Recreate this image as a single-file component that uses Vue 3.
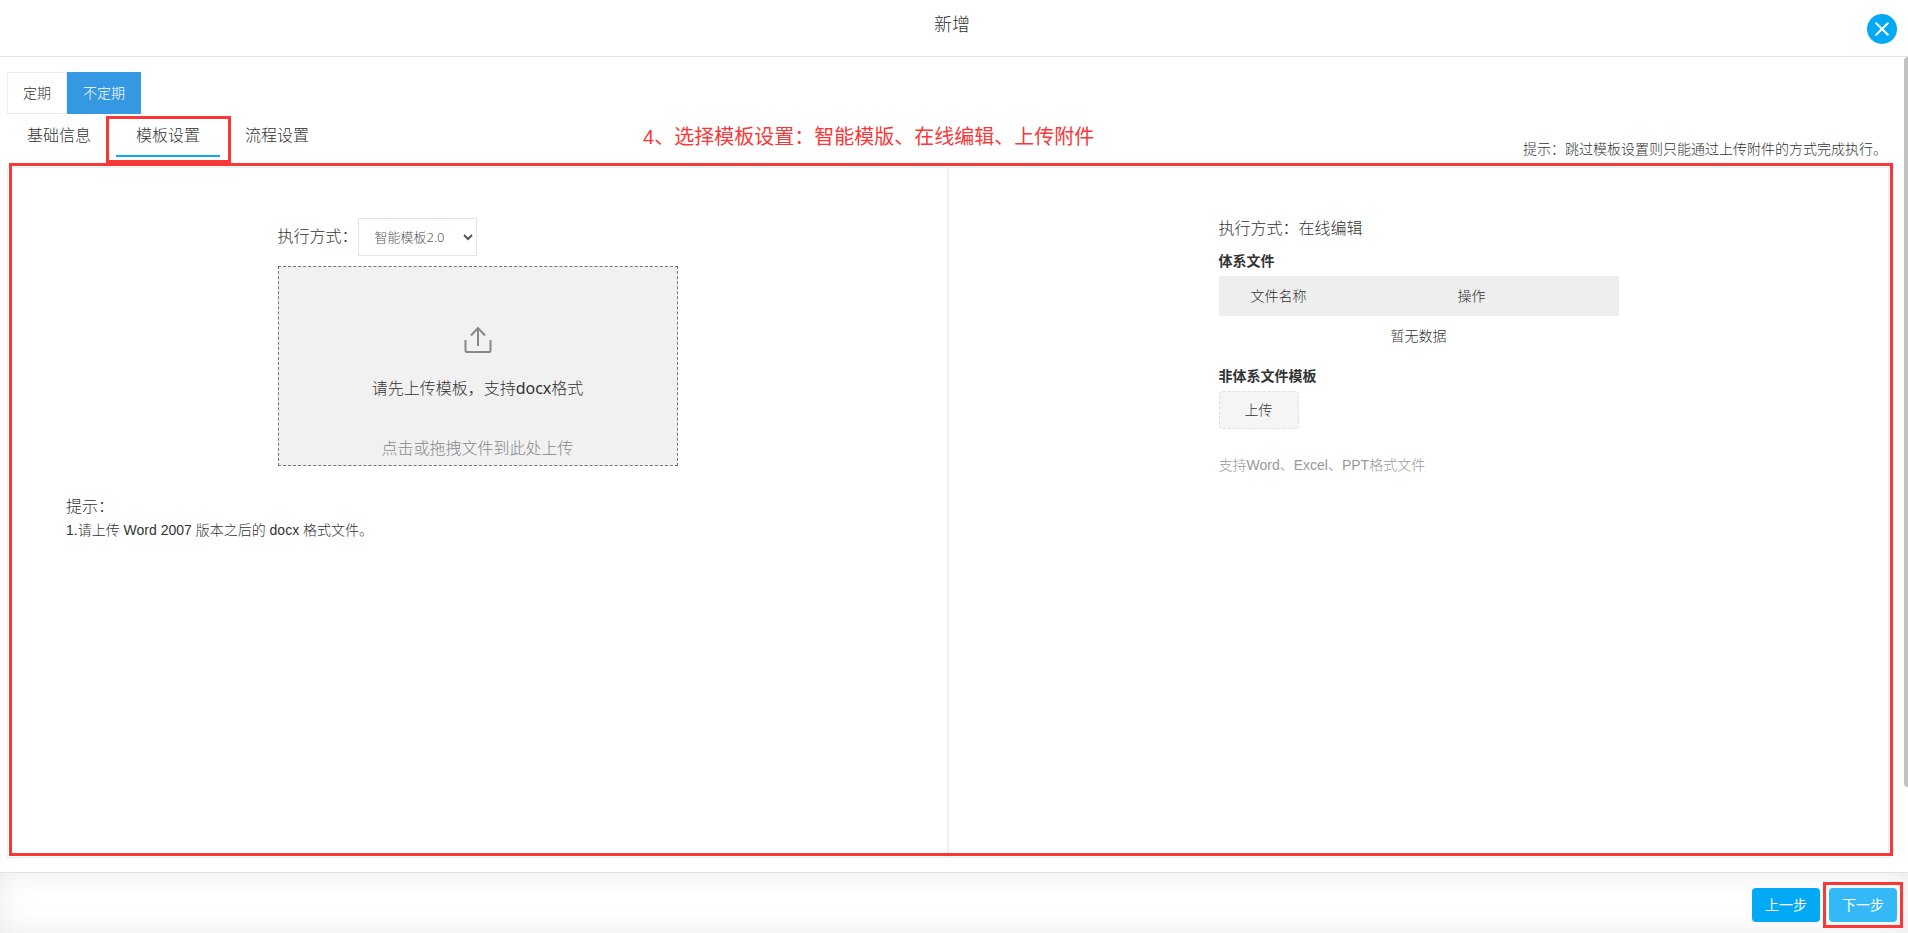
<script setup>
import { ref } from 'vue'

const periods = ['定期', '不定期']
const period = ref('不定期')
const tabs = ['基础信息', '模板设置', '流程设置']
const tab = ref('模板设置')
const mode = ref('智能模板2.0')
</script>

<template>
  <div class="dialog">
    <header class="head">
      <h1 class="title">新增</h1>
      <button class="close" type="button" aria-label="关闭">
        <svg width="14" height="14" viewBox="0 0 14 14" fill="none" stroke="#fff" stroke-width="2" stroke-linecap="round">
          <path d="M1.2 1.2 12.8 12.8M12.8 1.2 1.2 12.8" />
        </svg>
      </button>
    </header>

    <main class="body">
      <div class="periods">
        <button
          v-for="p in periods"
          :key="p"
          type="button"
          class="period"
          :class="{ active: p === period }"
          @click="period = p"
        >{{ p }}</button>
      </div>

      <div class="bar">
        <nav class="tabs">
          <button
            v-for="t in tabs"
            :key="t"
            type="button"
            class="tab"
            :class="{ active: t === tab }"
            @click="tab = t"
          >{{ t }}</button>
        </nav>
        <p class="note">4、选择模板设置：智能模版、在线编辑、上传附件</p>
        <p class="hint">提示：跳过模板设置则只能通过上传附件的方式完成执行。</p>
      </div>

      <div class="panel">
        <section class="half smart">
          <div class="column">
            <div class="mode">
              <label for="mode">执行方式：</label>
              <select id="mode" v-model="mode" class="select">
                <option>智能模板2.0</option>
              </select>
            </div>
            <button type="button" class="drop">
              <svg class="upload-icon" width="28" height="28" viewBox="0 0 28 28" fill="none" stroke="#888" stroke-width="2">
                <path d="M1.5 14v10.500q0 1.500 1.500 1.500h22q1.500 0 1.500-1.500V14" />
                <path d="M14 20V2M7 9.500 14 2l7 7.500" />
              </svg>
              <span class="drop-main">请先上传模板，支持<span class="ext">docx</span>格式</span>
              <span class="drop-sub">点击或拖拽文件到此处上传</span>
            </button>
          </div>
          <div class="tips">
            <p class="tips-title">提示：</p>
            <p>1.请上传 Word 2007 版本之后的 docx 格式文件。</p>
          </div>
        </section>

        <section class="half online">
          <div class="column">
            <p class="way">执行方式：在线编辑</p>
            <h2 class="sub">体系文件</h2>
            <table class="files">
              <thead>
                <tr>
                  <th class="name">文件名称</th>
                  <th class="action">操作</th>
                </tr>
              </thead>
              <tbody>
                <tr>
                  <td colspan="2">暂无数据</td>
                </tr>
              </tbody>
            </table>
            <h2 class="sub">非体系文件模板</h2>
            <button type="button" class="upload">上传</button>
            <p class="support">支持Word、Excel、PPT格式文件</p>
          </div>
        </section>
      </div>

      <div class="scroll"></div>
    </main>

    <footer class="foot">
      <button type="button" class="step">上一步</button>
      <button type="button" class="step next">下一步</button>
    </footer>
  </div>
</template>

<style>
body {
  margin: 0;
  background: #fff;
}
</style>

<style scoped>
.dialog {
  display: flex;
  flex-direction: column;
  min-height: 100vh;
  box-sizing: border-box;
  font-family: "Liberation Sans", "Noto Sans CJK SC", sans-serif;
  font-size: 14px;
  font-weight: 300;
  line-height: 20px;
  color: #333;
}
.dialog *,
.dialog *::after {
  box-sizing: border-box;
}
h1, h2, p {
  margin: 0;
}
button, select {
  font: inherit;
  color: inherit;
  margin: 0;
  padding: 0;
  border: 0;
  background: none;
  cursor: pointer;
}
.head {
  position: relative;
  height: 57px;
  padding-right: 4px;
  border-bottom: 1px solid #e2e2e2;
  text-align: center;
}
.title {
  font-size: 18px;
  font-weight: 300;
  line-height: 50px;
}
.close {
  position: absolute;
  top: 14px;
  right: 11px;
  display: flex;
  align-items: center;
  justify-content: center;
  width: 30px;
  height: 30px;
  border-radius: 50%;
  background: #03a9f4;
}
.body {
  position: relative;
  flex: 1;
  display: flex;
  flex-direction: column;
  padding: 15px 19px 14px 7px;
}
.periods {
  display: flex;
}
.period {
  height: 42px;
  padding: 0 15px;
  border: 1px solid #eee;
}
.period.active {
  padding: 0 16px;
  border: 0;
  background: #3498e2;
  color: #fff;
}
.bar {
  display: flex;
  height: 53px;
  padding-right: 2px;
}
.tabs {
  display: flex;
  gap: 5px;
  height: 43px;
}
.tab {
  position: relative;
  padding: 3px 20px 0;
  border-bottom: 2px solid transparent;
  font-size: 16px;
}
.tab.active {
  border-bottom-color: #03a9f4;
}
.tab.active::after {
  content: "";
  position: absolute;
  inset: 2px -11px -8px -10px;
  border: 3px solid #f93737;
}
.note {
  margin-left: 314px;
  font-size: 20px;
  font-weight: 400;
  line-height: 46px;
  color: #f93737;
}
.hint {
  margin-left: auto;
  padding-top: 25px;
}
.panel {
  position: relative;
  flex: 1;
  display: flex;
  border: 1px solid #eee;
}
.panel::after {
  content: "";
  position: absolute;
  inset: -5px -5px 1px 1px;
  border: 3px solid #f93737;
  pointer-events: none;
}
.half {
  flex: 1;
}
.smart {
  padding-top: 50px;
  border-right: 2px solid #f1f1f1;
}
.online {
  padding-top: 49px;
}
.column {
  width: 400px;
  margin: 0 auto;
}
.mode {
  display: flex;
  align-items: center;
  margin-bottom: 10px;
  font-size: 16px;
}
.select {
  width: 119px;
  height: 38px;
  padding-left: 12px;
  border: 1px solid #e2e5e8;
  background: #fff;
  font-family: "Noto Sans", "Noto Sans CJK SC", sans-serif;
  font-size: 13px;
  color: #555;
}
.drop {
  display: flex;
  flex-direction: column;
  align-items: center;
  width: 100%;
  height: 200px;
  padding-top: 59px;
  border: 1px dashed #777;
  background: #f1f1f1;
  font-family: "Noto Sans", "Noto Sans CJK SC", sans-serif;
  font-size: 16px;
  line-height: 24px;
}
.drop-main {
  margin: 22px 0 36px;
}
.ext {
  font-weight: 400;
}
.drop-sub {
  color: #888;
}
.tips {
  margin: 28px 58px 0;
  line-height: 22px;
}
.tips-title,
.way {
  font-size: 16px;
  line-height: 24px;
}
.tips-title {
  padding-top: 1px;
}
.sub {
  margin: 10px 0 5px;
  font-size: 14px;
  font-weight: 700;
  line-height: 20px;
}
.files {
  width: 100%;
  border-collapse: collapse;
}
.files th,
.files td {
  height: 40px;
  padding: 0;
  font-weight: 300;
  text-align: center;
}
.files thead {
  background: #eee;
}
.files .name {
  width: 30%;
}
.files .action {
  width: 70%;
  padding-right: 14px;
}
.upload {
  width: 80px;
  height: 38px;
  border: 1px dashed #e0e0e0;
  border-radius: 4px;
  background: #f5f5f5;
}
.support {
  margin-top: 26px;
  color: #999;
}
.scroll {
  position: absolute;
  top: 0;
  right: 0;
  width: 4px;
  height: calc(100% - 85px);
  border-radius: 4px 0 0 4px;
  background: #c1c1c1;
}
.foot {
  display: flex;
  justify-content: flex-end;
  gap: 9px;
  height: 61px;
  padding: 15px 11px 0;
  border-top: 1px solid #e2e2e2;
  box-shadow: inset 0 0 30px #ebebeb;
}
.step {
  position: relative;
  width: 68px;
  height: 34px;
  border-radius: 4px;
  background: #03a9f4;
  color: #fff;
  font-weight: 400;
}
.next {
  background: #35b9f6;
}
.next::after {
  content: "";
  position: absolute;
  inset: -6px;
  border: 3px solid #f93737;
}
</style>
